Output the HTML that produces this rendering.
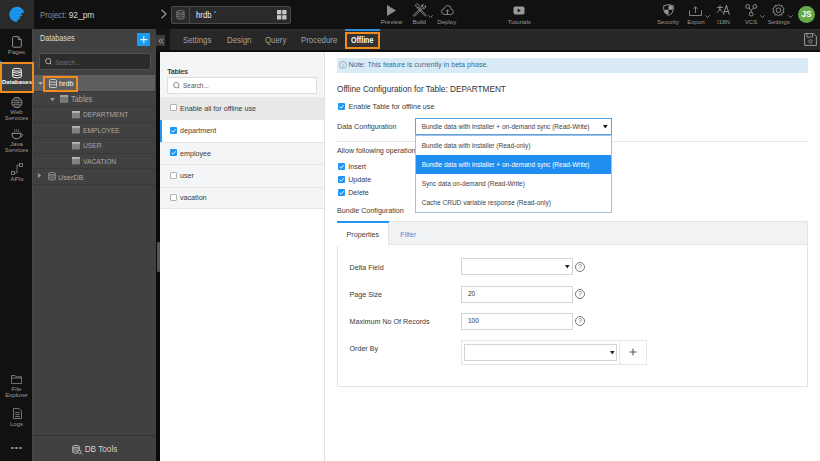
<!DOCTYPE html>
<html><head><meta charset="utf-8">
<style>
*{box-sizing:border-box;margin:0;padding:0}
html,body{width:820px;height:461px;overflow:hidden;background:#fff;font-family:"Liberation Sans",sans-serif;}
.a{position:absolute}
.t{position:absolute;white-space:nowrap;line-height:1}
svg{position:absolute;overflow:visible}
.lbl{position:absolute;white-space:nowrap;line-height:1;font-size:6.1px;color:#989898;transform:translateX(-50%);margin-top:0.1px}
.sl{position:absolute;white-space:nowrap;line-height:5.9px;font-size:6.1px;color:#9c9c9c;transform:translateX(-50%);text-align:center}
.tab{position:absolute;white-space:nowrap;line-height:1;font-size:8.2px;color:#a2a2a2;top:36.5px;transform:scaleX(0.96);transform-origin:0 0}
.tr{position:absolute;left:33px;width:123px;height:1px;background:#383838}
.tt{position:absolute;white-space:nowrap;line-height:1;font-size:7.7px;color:#a8a8a8;transform:scaleX(0.87);transform-origin:0 0}
.cb{position:absolute;width:7.3px;height:7.3px;border:1px solid #b4b4b4;background:#fff;border-radius:1px}
.cbc{position:absolute;width:7.2px;height:7.2px;background:#2196f3;border-radius:1px}
.body7{position:absolute;white-space:nowrap;line-height:1;font-size:7.15px;color:#3a3a3a}
.opt{position:absolute;white-space:nowrap;line-height:1;font-size:6.55px;color:#444}
.inp{position:absolute;border:1px solid #d4d4d4;background:#fff}
.help{position:absolute;width:10px;height:10px;border:1px solid #777;border-radius:50%;font-size:7px;line-height:8px;text-align:center;color:#666}
</style></head><body>
<!-- ============ TOP BAR ============ -->
<div class="a" style="left:0;top:0;width:820px;height:29px;background:#111"></div>
<div class="a" style="left:0;top:0;width:34px;height:29px;background:#2a2a2a"></div>
<svg style="left:0;top:0" width="34" height="29" viewBox="0 0 34 29">
  <path d="M17 22 A7.6 7.6 0 1 1 24.2 12.2 L20.8 13.8 L22.4 15.4 L19.2 16.9 L20.4 18.7 L17.4 20 Z" fill="#1e96f0"/>
  <path d="M11.5 12.5 Q17 8.5 22.5 11.8 M11.8 15.8 Q16.5 12 21 15.3 M12.8 19 Q16 15.8 19.5 18.6" stroke="#1a80d6" stroke-width="0.8" fill="none"/>
</svg>
<div class="t" style="left:39.6px;top:10.5px;font-size:8.5px;color:#8c8c8c;transform:scaleX(0.92);transform-origin:0 0">Project: <span style="color:#dadada;font-size:9.1px">92_pm</span></div>
<!-- chevron -->
<svg style="left:160px;top:9px" width="8" height="10"><path d="M1.5 0.8 L6 5 L1.5 9.2" stroke="#9a9a9a" stroke-width="1.2" fill="none"/></svg>
<!-- breadcrumb box -->
<div class="a" style="left:170.5px;top:6px;width:120.5px;height:17.5px;border:1px solid #4a4a4a;border-radius:2px;background:#2a2a2a"></div>
<div class="a" style="left:189px;top:6.5px;width:1px;height:16.5px;background:#4a4a4a"></div>
<svg style="left:176px;top:10px" width="9" height="10" viewBox="0 0 9 10">
  <ellipse cx="4.5" cy="1.8" rx="3.6" ry="1.3" stroke="#8a8a8a" stroke-width="0.8" fill="none"/>
  <path d="M0.9 1.8 V8.2 Q4.5 10.4 8.1 8.2 V1.8 M0.9 4 Q4.5 6.2 8.1 4 M0.9 6.1 Q4.5 8.3 8.1 6.1" stroke="#8a8a8a" stroke-width="0.8" fill="none"/>
</svg>
<div class="t" style="left:195.7px;top:11px;font-size:8.8px;color:#f0f0f0;transform:scaleX(0.88);transform-origin:0 0">hrdb</div>
<div class="a" style="left:214px;top:10.5px;width:2.2px;height:2.2px;border-radius:50%;background:#2196f3"></div>
<svg style="left:276.7px;top:10px" width="10" height="10"><rect x="0" y="0" width="4.3" height="4.3" fill="#c8c8c8"/><rect x="5.2" y="0" width="4.3" height="4.3" fill="#c8c8c8"/><rect x="0" y="5.2" width="4.3" height="4.3" fill="#c8c8c8"/><rect x="5.2" y="5.2" width="4.3" height="4.3" fill="#c8c8c8"/></svg>

<!-- toolbar icons -->
<svg style="left:386.9px;top:4.9px" width="10" height="11"><path d="M0 0 L9 5.5 L0 11 Z" fill="#8e8e8e"/></svg>
<div class="lbl" style="left:391.5px;top:18.5px">Preview</div>
<svg style="left:412.5px;top:3.8px" width="14" height="13" viewBox="0 0 14 13">
  <path d="M9.3 4.6 L1.6 12.1 Q0.9 12.6 0.5 12 Q0.2 11.5 0.8 11 L8.2 3.4" stroke="#8e8e8e" stroke-width="0.9" fill="none"/>
  <path d="M8.2 3.4 Q7.6 1.2 9.6 0.6 L10.4 0.5 L9.2 2 L10.1 3.3 L11.7 2.6 L12.6 1.6 Q13.1 3.8 11.2 4.6 Q10.2 5 9.3 4.6" stroke="#8e8e8e" stroke-width="0.9" fill="none"/>
  <path d="M4.2 3.8 L11.8 11.6 Q12.4 12.3 12.9 11.8 Q13.4 11.3 12.7 10.7 L5.2 2.9" stroke="#8e8e8e" stroke-width="0.9" fill="none"/>
  <path d="M2.2 1.3 L4 -0.3 L6.6 2.1 L4.6 4.1 Z" stroke="#8e8e8e" stroke-width="0.9" fill="none"/>
</svg>
<svg style="left:428.3px;top:14.5px" width="5" height="3"><path d="M0.3 0.3 L2.5 2.5 L4.7 0.3" stroke="#8e8e8e" stroke-width="0.8" fill="none"/></svg>
<div class="lbl" style="left:419.2px;top:18.5px">Build</div>
<svg style="left:440.6px;top:5px" width="13" height="10" viewBox="0 0 13 10">
  <path d="M4 9.5 H9.6 Q12.4 9.5 12.4 6.9 Q12.4 4.6 10.2 4.4 Q10 0.5 6.6 0.5 Q3.8 0.5 3.2 3.6 Q0.5 3.8 0.5 6.6 Q0.5 9.5 4 9.5 Z" stroke="#8e8e8e" stroke-width="0.9" fill="none"/>
  <path d="M6.5 9.5 V4.8 M5 6.3 L6.5 4.8 L8 6.3" stroke="#8e8e8e" stroke-width="0.9" fill="none"/>
</svg>
<div class="lbl" style="left:446.8px;top:18.5px">Deploy</div>
<svg style="left:513.2px;top:6.2px" width="12" height="9"><rect x="0.5" y="0.5" width="11" height="8" rx="1.8" fill="#9a9a9a"/><path d="M4.6 2.6 L7.8 4.5 L4.6 6.4 Z" fill="#111"/></svg>
<div class="lbl" style="left:519.3px;top:18.5px">Tutorials</div>

<svg style="left:662.6px;top:4.4px" width="11" height="12" viewBox="0 0 11 12">
  <path d="M5.5 0.5 L10.3 1.8 V5.5 Q10.3 9.5 5.5 11.5 Q0.7 9.5 0.7 5.5 V1.8 Z" stroke="#9a9a9a" stroke-width="0.9" fill="none"/>
  <path d="M5.5 1.2 V5.8 H9.7 V1.9 Z M5.5 5.8 V10.8 Q1.5 9.2 1.3 5.8 Z" fill="#9a9a9a"/>
</svg>
<div class="lbl" style="left:668px;top:18.5px">Security</div>
<svg style="left:689px;top:6px" width="13" height="10" viewBox="0 0 13 10">
  <path d="M0.5 4.5 V9.5 H12.5 V4.5" stroke="#8e8e8e" stroke-width="0.9" fill="none"/>
  <path d="M6.5 7 V0.8 M4.5 2.8 L6.5 0.8 L8.5 2.8" stroke="#8e8e8e" stroke-width="0.9" fill="none"/>
</svg>
<svg style="left:704.8px;top:14.5px" width="5" height="3"><path d="M0.3 0.3 L2.5 2.5 L4.7 0.3" stroke="#8e8e8e" stroke-width="0.8" fill="none"/></svg>
<div class="lbl" style="left:696px;top:18.5px">Export</div>
<svg style="left:716px;top:4px" width="15" height="12" viewBox="0 0 15 12">
  <path d="M1 3.4 H7 M4 1.2 V3.6 Q3.8 6.5 1.2 8.7 M4.1 4.8 Q5 7 7 8.7" stroke="#9a9a9a" stroke-width="0.9" fill="none"/>
  <path d="M7.4 10.8 L10.4 1.2 L13.4 10.8 M8.5 7.6 H12.3" stroke="#9a9a9a" stroke-width="1" fill="none"/>
</svg>
<div class="lbl" style="left:723.5px;top:18.5px">I18N</div>
<svg style="left:744.8px;top:4.1px" width="13" height="13" viewBox="0 0 13 13">
  <circle cx="2.6" cy="2.5" r="1.9" stroke="#9a9a9a" stroke-width="0.9" fill="none"/>
  <circle cx="9.9" cy="2.5" r="1.9" stroke="#9a9a9a" stroke-width="0.9" fill="none"/>
  <circle cx="6.2" cy="10.1" r="1.9" stroke="#9a9a9a" stroke-width="0.9" fill="none"/>
  <path d="M3.9 3.9 L6.2 6.4 L8.6 3.9 M6.2 6.4 V8.2" stroke="#9a9a9a" stroke-width="0.9" fill="none"/>
</svg>
<svg style="left:760.3px;top:14.5px" width="5" height="3"><path d="M0.3 0.3 L2.5 2.5 L4.7 0.3" stroke="#8e8e8e" stroke-width="0.8" fill="none"/></svg>
<div class="lbl" style="left:751px;top:18.5px">VCS</div>
<svg style="left:772.3px;top:4.1px" width="13" height="12" viewBox="0 0 13 12">
  <path d="M6.5 0.5 L8 1.8 L10 1.6 L10.4 3.5 L12.1 4.6 L11.2 6.4 L12 8.2 L10.2 9 L9.6 11 L7.6 10.6 L6.5 12 L5.1 10.6 L3.1 11 L2.6 9 L0.8 8.2 L1.7 6.4 L0.9 4.6 L2.6 3.5 L3 1.6 L5 1.8 Z" stroke="#9a9a9a" stroke-width="0.9" fill="none" stroke-linejoin="round"/>
  <circle cx="6.5" cy="6.2" r="2.3" stroke="#9a9a9a" stroke-width="0.9" fill="none"/>
</svg>
<svg style="left:787.7px;top:14.5px" width="5" height="3"><path d="M0.3 0.3 L2.5 2.5 L4.7 0.3" stroke="#8e8e8e" stroke-width="0.8" fill="none"/></svg>
<div class="lbl" style="left:778.7px;top:18.5px">Settings</div>
<div class="a" style="left:798px;top:6.3px;width:16.8px;height:16.8px;border-radius:50%;background:#68a948"></div>
<div class="t" style="left:806.4px;top:10.8px;font-size:8.2px;color:#fff;font-weight:bold;transform:translateX(-50%)">JS</div>

<!-- ============ LEFT SIDEBAR ============ -->
<div class="a" style="left:0;top:29px;width:32px;height:432px;background:#111"></div>
<svg style="left:12px;top:36.2px" width="10" height="12" viewBox="0 0 10 12"><path d="M1.6 0.6 H6.3 L9.3 3.6 V10.2 Q9.3 11.2 8.3 11.2 H1.6 Q0.6 11.2 0.6 10.2 V1.6 Q0.6 0.6 1.6 0.6 Z M6.3 0.6 V3.6 H9.3" stroke="#8e8e8e" stroke-width="1" fill="none"/></svg>
<div class="sl" style="left:16.5px;top:48.5px">Pages</div>
<svg style="left:10.8px;top:97px" width="12" height="11" viewBox="0 0 12 11">
  <circle cx="5.9" cy="5.5" r="5.1" stroke="#9a9a9a" stroke-width="0.9" fill="none"/>
  <path d="M3.9 0.8 V10.2 M5.9 0.4 V10.6 M7.9 0.8 V10.2 M1 3.4 H10.8 M0.8 5.5 H11 M1 7.6 H10.8" stroke="#8a8a8a" stroke-width="0.6" fill="none"/>
</svg>
<div class="sl" style="left:16.5px;top:109.4px">Web<br>Services</div>
<svg style="left:10.8px;top:129.2px" width="12" height="11" viewBox="0 0 12 11">
  <path d="M3.6 0.3 Q3 1 3.6 1.7 Q4.2 2.4 3.6 3.1 M5.6 0.3 Q5 1 5.6 1.7 Q6.2 2.4 5.6 3.1 M7.6 0.3 Q7 1 7.6 1.7 Q8.2 2.4 7.6 3.1" stroke="#9a9a9a" stroke-width="0.7" fill="none"/>
  <path d="M1 4.3 H10 Q10 9.8 5.5 9.8 Q1 9.8 1 4.3 Z" stroke="#9a9a9a" stroke-width="1" fill="none"/>
  <path d="M9.9 5 Q11.8 5 11.5 6.6 Q11.2 7.8 9.2 7.9" stroke="#9a9a9a" stroke-width="0.8" fill="none"/>
</svg>
<div class="sl" style="left:16.5px;top:141px;line-height:6.4px">Java<br>Services</div>
<svg style="left:11.3px;top:163.4px" width="12" height="12" viewBox="0 0 12 12">
  <rect x="8.5" y="0.5" width="3" height="3" stroke="#8a8a8a" stroke-width="0.8" fill="none"/>
  <rect x="0.5" y="8.5" width="3" height="3" stroke="#8a8a8a" stroke-width="0.8" fill="none"/>
  <path d="M8.5 2 H6 V10 H3.5" stroke="#8a8a8a" stroke-width="0.8" fill="none"/>
</svg>
<div class="sl" style="left:17px;top:175.7px">APIs</div>
<svg style="left:10.8px;top:375.4px" width="11" height="9" viewBox="0 0 11 9"><path d="M0.5 0.5 H4 L5 1.8 H10.5 V8.5 H0.5 Z M0.5 3 H10.5" stroke="#8a8a8a" stroke-width="0.8" fill="none"/></svg>
<div class="sl" style="left:16.5px;top:386px;line-height:6px">File<br>Explorer</div>
<svg style="left:12.5px;top:407.7px" width="9" height="11" viewBox="0 0 9 11"><path d="M0.5 0.5 H6 L8.5 3 V10.5 H0.5 Z M2.2 4.5 H6.8 M2.2 6.5 H6.8 M2.2 8.5 H6.8" stroke="#8a8a8a" stroke-width="0.8" fill="none"/></svg>
<div class="sl" style="left:16.5px;top:421.4px">Logs</div>
<div class="a" style="left:11px;top:446.6px;width:2.6px;height:2.6px;border-radius:50%;background:#8a8a8a"></div>
<div class="a" style="left:15.2px;top:446.6px;width:2.6px;height:2.6px;border-radius:50%;background:#8a8a8a"></div>
<div class="a" style="left:19.4px;top:446.6px;width:2.6px;height:2.6px;border-radius:50%;background:#8a8a8a"></div>

<!-- ============ DB PANEL ============ -->
<div class="a" style="left:32px;top:29px;width:124px;height:432px;background:#414141;border-left:1px solid #484848"></div>
<div class="t" style="left:40px;top:34.4px;font-size:8.3px;color:#dcdcdc;transform:scaleX(0.87);transform-origin:0 0">Databases</div>
<div class="a" style="left:137px;top:33.4px;width:13px;height:12.7px;background:#1a9bf0"></div>
<svg style="left:137px;top:33.4px" width="13" height="13"><path d="M6.8 3 V10.2 M3.3 6.6 H10.3" stroke="#e8f4ff" stroke-width="1.05"/></svg>
<div class="a" style="left:39.2px;top:53.2px;width:112px;height:16.8px;background:#2c2c2c;border:1px solid #505050;border-radius:2px"></div>
<svg style="left:45px;top:58.3px" width="8" height="8" viewBox="0 0 8 8"><circle cx="3.2" cy="3.2" r="2.7" stroke="#bbb" stroke-width="0.9" fill="none"/><path d="M5 5 L6.3 6.3" stroke="#bbb" stroke-width="0.9"/></svg>
<div class="t" style="left:54.7px;top:58.8px;font-size:7px;color:#707070;transform:scaleX(0.9);transform-origin:0 0">Search...</div>

<div class="a" style="left:34px;top:75.2px;width:121px;height:15.8px;background:#5f5f5f"></div>
<div class="tr" style="top:90.7px"></div>
<div class="tr" style="top:106.3px"></div>
<div class="tr" style="top:121.8px"></div>
<div class="tr" style="top:137.3px"></div>
<div class="tr" style="top:152.8px"></div>
<div class="tr" style="top:168.3px"></div>
<div class="tr" style="top:183.7px"></div>
<svg style="left:38px;top:82.2px" width="5" height="4"><path d="M0 0 H5 L2.5 3.2 Z" fill="#aaa"/></svg>
<div class="a" style="left:43px;top:75.5px;width:34.5px;height:16.5px;border:2px solid #f28a1e"></div>
<svg style="left:48.6px;top:79px" width="8" height="9" viewBox="0 0 8 9"><rect x="0.5" y="0.5" width="7" height="8" rx="1" stroke="#ddd" stroke-width="0.8" fill="none"/><path d="M0.5 3.2 H7.5 M0.5 5.8 H7.5" stroke="#ddd" stroke-width="0.8"/></svg>
<div class="t" style="left:58.9px;top:79.6px;font-size:8px;color:#fafafa;transform:scaleX(0.9);transform-origin:0 0">hrdb</div>
<svg style="left:50px;top:97.5px" width="5" height="4"><path d="M0 0 H5 L2.5 3.2 Z" fill="#999"/></svg>
<svg style="left:60px;top:94.8px" width="9" height="8" viewBox="0 0 9 8"><rect x="0" y="0" width="8.2" height="7.8" fill="#808080"/><rect x="0" y="0" width="8.2" height="2" fill="#a0a0a0"/><path d="M0 4.1 H8.2 M0 6 H8.2 M2.8 2 V7.8 M5.5 2 V7.8" stroke="#6c6c6c" stroke-width="0.5"/></svg>
<div class="tt" style="left:71px;top:95.5px;font-size:8.2px;transform:scaleX(0.9)">Tables</div>
<svg style="left:72.2px;top:110.8px" width="8" height="8" viewBox="0 0 8 8"><rect x="0" y="0" width="7.8" height="7.3" fill="#8a8a8a"/><rect x="0" y="0" width="7.8" height="1.8" fill="#b8b8b8"/><path d="M0 3.9 H7.8 M0 5.6 H7.8 M2.6 1.8 V7.3 M5.2 1.8 V7.3" stroke="#777" stroke-width="0.5"/></svg>
<div class="tt" style="left:82.6px;top:111.1px">DEPARTMENT</div>
<svg style="left:72.2px;top:126.3px" width="8" height="8" viewBox="0 0 8 8"><rect x="0" y="0" width="7.8" height="7.3" fill="#8a8a8a"/><rect x="0" y="0" width="7.8" height="1.8" fill="#b8b8b8"/><path d="M0 3.9 H7.8 M0 5.6 H7.8 M2.6 1.8 V7.3 M5.2 1.8 V7.3" stroke="#777" stroke-width="0.5"/></svg>
<div class="tt" style="left:82.6px;top:126.9px">EMPLOYEE</div>
<svg style="left:72.2px;top:141.8px" width="8" height="8" viewBox="0 0 8 8"><rect x="0" y="0" width="7.8" height="7.3" fill="#8a8a8a"/><rect x="0" y="0" width="7.8" height="1.8" fill="#b8b8b8"/><path d="M0 3.9 H7.8 M0 5.6 H7.8 M2.6 1.8 V7.3 M5.2 1.8 V7.3" stroke="#777" stroke-width="0.5"/></svg>
<div class="tt" style="left:82.6px;top:142.1px">USER</div>
<svg style="left:72.2px;top:157.3px" width="8" height="8" viewBox="0 0 8 8"><rect x="0" y="0" width="7.8" height="7.3" fill="#8a8a8a"/><rect x="0" y="0" width="7.8" height="1.8" fill="#b8b8b8"/><path d="M0 3.9 H7.8 M0 5.6 H7.8 M2.6 1.8 V7.3 M5.2 1.8 V7.3" stroke="#777" stroke-width="0.5"/></svg>
<div class="tt" style="left:82.6px;top:157.8px">VACATION</div>
<svg style="left:38.4px;top:173.2px" width="4" height="5"><path d="M0 0 V5 L3.2 2.5 Z" fill="#999"/></svg>
<svg style="left:48.1px;top:172px" width="8" height="9" viewBox="0 0 8 9">
  <ellipse cx="4" cy="1.5" rx="3.3" ry="1.1" stroke="#999" stroke-width="0.8" fill="none"/>
  <path d="M0.7 1.5 V7.5 Q4 9 7.3 7.5 V1.5 M0.7 3.5 Q4 5 7.3 3.5 M0.7 5.5 Q4 7 7.3 5.5" stroke="#999" stroke-width="0.8" fill="none"/>
</svg>
<div class="tt" style="left:58.3px;top:174.1px;font-size:8.1px;transform:scaleX(0.9)">UserDB</div>

<div class="a" style="left:32px;top:435px;width:124px;height:1px;background:#333"></div>
<svg style="left:72px;top:444.5px" width="11" height="10" viewBox="0 0 11 10">
  <ellipse cx="4" cy="1.5" rx="3.3" ry="1.1" stroke="#ccc" stroke-width="0.8" fill="none"/>
  <path d="M0.7 1.5 V7.5 Q4 9 7.3 7.5 V1.5 M0.7 3.5 Q4 5 7.3 3.5 M0.7 5.5 Q4 7 7.3 5.5" stroke="#ccc" stroke-width="0.8" fill="none"/>
  <circle cx="7.5" cy="7" r="1.6" stroke="#ccc" stroke-width="0.7" fill="#3c3c3c"/><path d="M8.6 8.1 L10 9.5" stroke="#ccc" stroke-width="0.8"/>
</svg>
<div class="t" style="left:84.7px;top:446.3px;font-size:8.2px;color:#d0d0d0">DB Tools</div>

<div class="a" style="left:0;top:62px;width:34.3px;height:31px;background:#3c3c3c;border:2.2px solid #f28a1e"></div>
<div class="a" style="left:0;top:60.8px;width:1.2px;height:2.2px;background:#2aa0f5"></div>
<svg style="left:11.7px;top:67.8px" width="10" height="11" viewBox="0 0 10 11">
  <ellipse cx="5" cy="1.8" rx="4.3" ry="1.4" stroke="#eee" stroke-width="1" fill="none"/>
  <path d="M0.7 1.8 V9 Q5 11 9.3 9 V1.8 M0.7 4.2 Q5 6.2 9.3 4.2 M0.7 6.6 Q5 8.6 9.3 6.6" stroke="#eee" stroke-width="1" fill="none"/>
</svg>
<div class="sl" style="left:17px;top:80px;color:#fff;font-weight:bold;font-size:6px">Databases</div>
<!-- separator strip -->
<div class="a" style="left:156px;top:29px;width:4px;height:432px;background:#0b0b0b"></div>
<div class="a" style="left:156.5px;top:241.7px;width:3px;height:30.6px;background:#555;border-radius:1px"></div>

<!-- ============ TAB BAR ============ -->
<div class="a" style="left:156px;top:29px;width:14px;height:22px;background:#151515"></div>
<div class="a" style="left:170px;top:29px;width:650px;height:21.4px;background:#272727;border-top:1px solid #2f2f2f"></div>
<div class="a" style="left:156px;top:34.9px;width:8.9px;height:11px;background:#3a3a3a"></div>
<svg style="left:157.5px;top:37.5px" width="6" height="6"><path d="M3 0.5 L0.8 3 L3 5.5 M5.5 0.5 L3.3 3 L5.5 5.5" stroke="#bbb" stroke-width="0.8" fill="none"/></svg>
<div class="tab" style="left:183.2px">Settings</div>
<div class="tab" style="left:226.7px">Design</div>
<div class="tab" style="left:265.4px">Query</div>
<div class="tab" style="left:300.8px">Procedure</div>
<div class="a" style="left:344.6px;top:29px;width:35.5px;height:2px;background:#2d8fd9"></div>
<div class="a" style="left:344.6px;top:32px;width:35.5px;height:17.2px;border:2px solid #f28a1e;background:#333"></div>
<div class="tab" style="left:351.2px;color:#fff;font-weight:bold;font-size:8.6px;top:35.8px;transform:scaleX(0.82)">Offline</div>
<svg style="left:804.1px;top:33.1px" width="13" height="13" viewBox="0 0 13 13">
  <path d="M0.6 0.6 H9.5 L12.4 3.5 V12.4 H0.6 Z" stroke="#999" stroke-width="1" fill="none"/>
  <path d="M3 0.6 V4 H8.5 V0.6" stroke="#999" stroke-width="0.9" fill="none"/>
  <circle cx="6.5" cy="8.4" r="1.6" stroke="#999" stroke-width="0.9" fill="none"/>
</svg>

<!-- ============ CONTENT ============ -->
<div class="a" style="left:160px;top:50.4px;width:660px;height:1.6px;background:#0d0d0d"></div>
<div class="a" style="left:160px;top:52px;width:660px;height:409px;background:#fff"></div>
<!-- tables panel -->
<div class="a" style="left:160px;top:52px;width:164.5px;height:45px;background:#f4f5f6"></div>
<div class="a" style="left:324.3px;top:52px;width:1px;height:409px;background:#e0e0e0"></div>
<div class="body7" style="left:167.2px;top:69.2px;color:#222;-webkit-text-stroke:0.15px #222">Tables</div>
<div class="inp" style="left:167.2px;top:77.1px;width:149.6px;height:16.5px;border-color:#dcdcdc"></div>
<svg style="left:172.8px;top:82.2px" width="8" height="8" viewBox="0 0 8 8"><circle cx="3.3" cy="3.1" r="2.75" stroke="#777" stroke-width="0.8" fill="none"/><path d="M5.2 5.1 L6.4 6.2" stroke="#777" stroke-width="0.8"/></svg>
<div class="t" style="left:182.5px;top:83.2px;font-size:6.8px;color:#555;transform:scaleX(0.95);transform-origin:0 0">Search...</div>
<div class="a" style="left:160px;top:97px;width:164.3px;height:22.6px;background:#e8e8e8"></div>
<div class="cb" style="left:169.8px;top:104px"></div>
<div class="body7" style="left:180px;top:105.8px">Enable all for offline use</div>
<div class="a" style="left:160px;top:119.6px;width:164.3px;height:22px;background:#fff"></div>
<div class="a" style="left:160px;top:119.6px;width:2px;height:22px;background:#2196f3"></div>
<div class="cbc" style="left:169.8px;top:126.8px"></div>
<svg style="left:169.8px;top:126.8px" width="8" height="8"><path d="M1.5 3.8 L3 5.2 L5.8 2.2" stroke="#f4f9ff" stroke-width="0.95" fill="none"/></svg>
<div class="body7" style="left:180px;top:128.2px">department</div>
<div class="a" style="left:160px;top:141.5px;width:164.3px;height:67px;background:#f4f5f6"></div>
<div class="a" style="left:160px;top:141.5px;width:164.3px;height:1px;background:#e4e4e4"></div>
<div class="a" style="left:160px;top:164px;width:164.3px;height:1px;background:#e4e4e4"></div>
<div class="a" style="left:160px;top:186.5px;width:164.3px;height:1px;background:#e4e4e4"></div>
<div class="a" style="left:160px;top:208.3px;width:164.3px;height:1px;background:#e4e4e4"></div>
<div class="cbc" style="left:169.8px;top:149px"></div>
<svg style="left:169.8px;top:149px" width="8" height="8"><path d="M1.5 3.8 L3 5.2 L5.8 2.2" stroke="#f4f9ff" stroke-width="0.95" fill="none"/></svg>
<div class="body7" style="left:180px;top:150.5px">employee</div>
<div class="cb" style="left:169.8px;top:171.5px"></div>
<div class="body7" style="left:180px;top:172.8px">user</div>
<div class="cb" style="left:169.8px;top:193.5px"></div>
<div class="body7" style="left:180px;top:194.8px">vacation</div>

<!-- right panel -->
<div class="a" style="left:337px;top:57.5px;width:471px;height:15.2px;background:#d9ebf7"></div>
<svg style="left:338.8px;top:60.9px" width="8" height="8" viewBox="0 0 8 8"><circle cx="3.9" cy="3.9" r="3.5" stroke="#8a9aa6" stroke-width="0.7" fill="none"/><path d="M3.9 3.3 V6.1" stroke="#8a9aa6" stroke-width="0.7"/><circle cx="3.9" cy="2.2" r="0.4" fill="#8a9aa6"/></svg>
<div class="body7" style="left:348.5px;top:61.8px;color:#3a6b90">Note: This feature is currently in beta phase.</div>
<div class="t" style="left:337px;top:86.3px;font-size:8.23px;color:#333">Offline Configuration for Table: DEPARTMENT</div>
<div class="cbc" style="left:338.2px;top:103.2px"></div>
<svg style="left:338.2px;top:103.2px" width="8" height="8"><path d="M1.5 3.8 L3 5.2 L5.8 2.2" stroke="#f4f9ff" stroke-width="0.95" fill="none"/></svg>
<div class="body7" style="left:348.5px;top:104.0px">Enable Table for offline use</div>
<div class="body7" style="left:337px;top:124.1px">Data Configuration</div>
<div class="a" style="left:337px;top:141px;width:471px;height:1px;background:#e6e6e6"></div>
<div class="body7" style="left:337px;top:148.0px">Allow following operations</div>
<div class="cbc" style="left:338px;top:163px"></div>
<svg style="left:338px;top:163px" width="8" height="8"><path d="M1.5 3.8 L3 5.2 L5.8 2.2" stroke="#f4f9ff" stroke-width="0.95" fill="none"/></svg>
<div class="body7" style="left:348.2px;top:163.7px">Insert</div>
<div class="cbc" style="left:338px;top:176.2px"></div>
<svg style="left:338px;top:176.2px" width="8" height="8"><path d="M1.5 3.8 L3 5.2 L5.8 2.2" stroke="#f4f9ff" stroke-width="0.95" fill="none"/></svg>
<div class="body7" style="left:348.2px;top:176.9px">Update</div>
<div class="cbc" style="left:338px;top:189.2px"></div>
<svg style="left:338px;top:189.2px" width="8" height="8"><path d="M1.5 3.8 L3 5.2 L5.8 2.2" stroke="#f4f9ff" stroke-width="0.95" fill="none"/></svg>
<div class="body7" style="left:348.2px;top:189.9px">Delete</div>
<div class="body7" style="left:337px;top:208px">Bundle Configuration</div>

<!-- bundle tabs panel -->
<div class="a" style="left:337px;top:221px;width:471px;height:165.5px;border:1px solid #e3e3e3;background:#fff"></div>
<div class="a" style="left:338px;top:222px;width:469px;height:23.3px;background:#f1f2f3;border-bottom:1px solid #e3e3e3"></div>
<div class="a" style="left:337px;top:221px;width:51.6px;height:25px;background:#fff;border-right:1px solid #e3e3e3"></div>
<div class="a" style="left:337px;top:221px;width:51.6px;height:2px;background:#2196f3"></div>
<div class="body7" style="left:346.6px;top:231.7px">Properties</div>
<div class="body7" style="left:400.3px;top:231.7px;color:#3d8fd1">Filter</div>

<div class="body7" style="left:349.5px;top:264.6px">Delta Field</div>
<div class="inp" style="left:461.1px;top:258.2px;width:111.6px;height:16.6px"></div>
<svg style="left:565px;top:264.5px" width="5" height="4"><path d="M0 0 H4.6 L2.3 3.6 Z" fill="#222"/></svg>
<div class="help" style="left:575px;top:261.5px">?</div>
<div class="body7" style="left:349.5px;top:291.8px">Page Size</div>
<div class="inp" style="left:461.1px;top:285.5px;width:111.6px;height:17.2px"></div>
<div class="t" style="left:468px;top:290.8px;font-size:6.5px;color:#333">20</div>
<div class="help" style="left:575px;top:289px">?</div>
<div class="body7" style="left:349.5px;top:319px">Maximum No Of Records</div>
<div class="inp" style="left:461.1px;top:312.9px;width:111.6px;height:16.8px"></div>
<div class="t" style="left:468px;top:318px;font-size:6.5px;color:#333">100</div>
<div class="help" style="left:575px;top:316px">?</div>
<div class="body7" style="left:349.5px;top:346.2px">Order By</div>
<div class="a" style="left:461px;top:339.7px;width:185.7px;height:24.9px;border:1px solid #e6e6e6"></div>
<div class="inp" style="left:464px;top:344px;width:153px;height:16.7px"></div>
<svg style="left:609.5px;top:350.5px" width="5" height="4"><path d="M0 0 H4.6 L2.3 3.6 Z" fill="#222"/></svg>
<div class="a" style="left:618.8px;top:339.7px;width:1px;height:24.9px;background:#e6e6e6"></div>
<svg style="left:628.5px;top:348.3px" width="8" height="8"><path d="M4 0.5 V7.5 M0.5 4 H7.5" stroke="#444" stroke-width="0.9"/></svg>

<!-- dropdown -->
<div class="a" style="left:415.3px;top:118.2px;width:196.5px;height:16.9px;border:1px solid #5aa3e0;background:#fff"></div>
<div class="opt" style="left:421.7px;top:124.2px">Bundle data with installer + on-demand sync (Read-Write)</div>
<svg style="left:603.3px;top:124.5px" width="5" height="4"><path d="M0 0 H4.6 L2.3 3.6 Z" fill="#111"/></svg>
<div class="a" style="left:415.3px;top:135.2px;width:196.5px;height:77.5px;border:1px solid #a4bfe6;background:#fff"></div>
<div class="opt" style="left:421.7px;top:142.7px">Bundle data with installer (Read-only)</div>
<div class="a" style="left:416.3px;top:155.2px;width:194.5px;height:18.8px;background:#1f8ef0"></div>
<div class="opt" style="left:421.7px;top:161.7px;color:#fff">Bundle data with installer + on-demand sync (Read-Write)</div>
<div class="opt" style="left:421.7px;top:181.2px">Sync data on-demand (Read-Write)</div>
<div class="opt" style="left:421.7px;top:200.2px">Cache CRUD variable response (Read-only)</div>
</body></html>
